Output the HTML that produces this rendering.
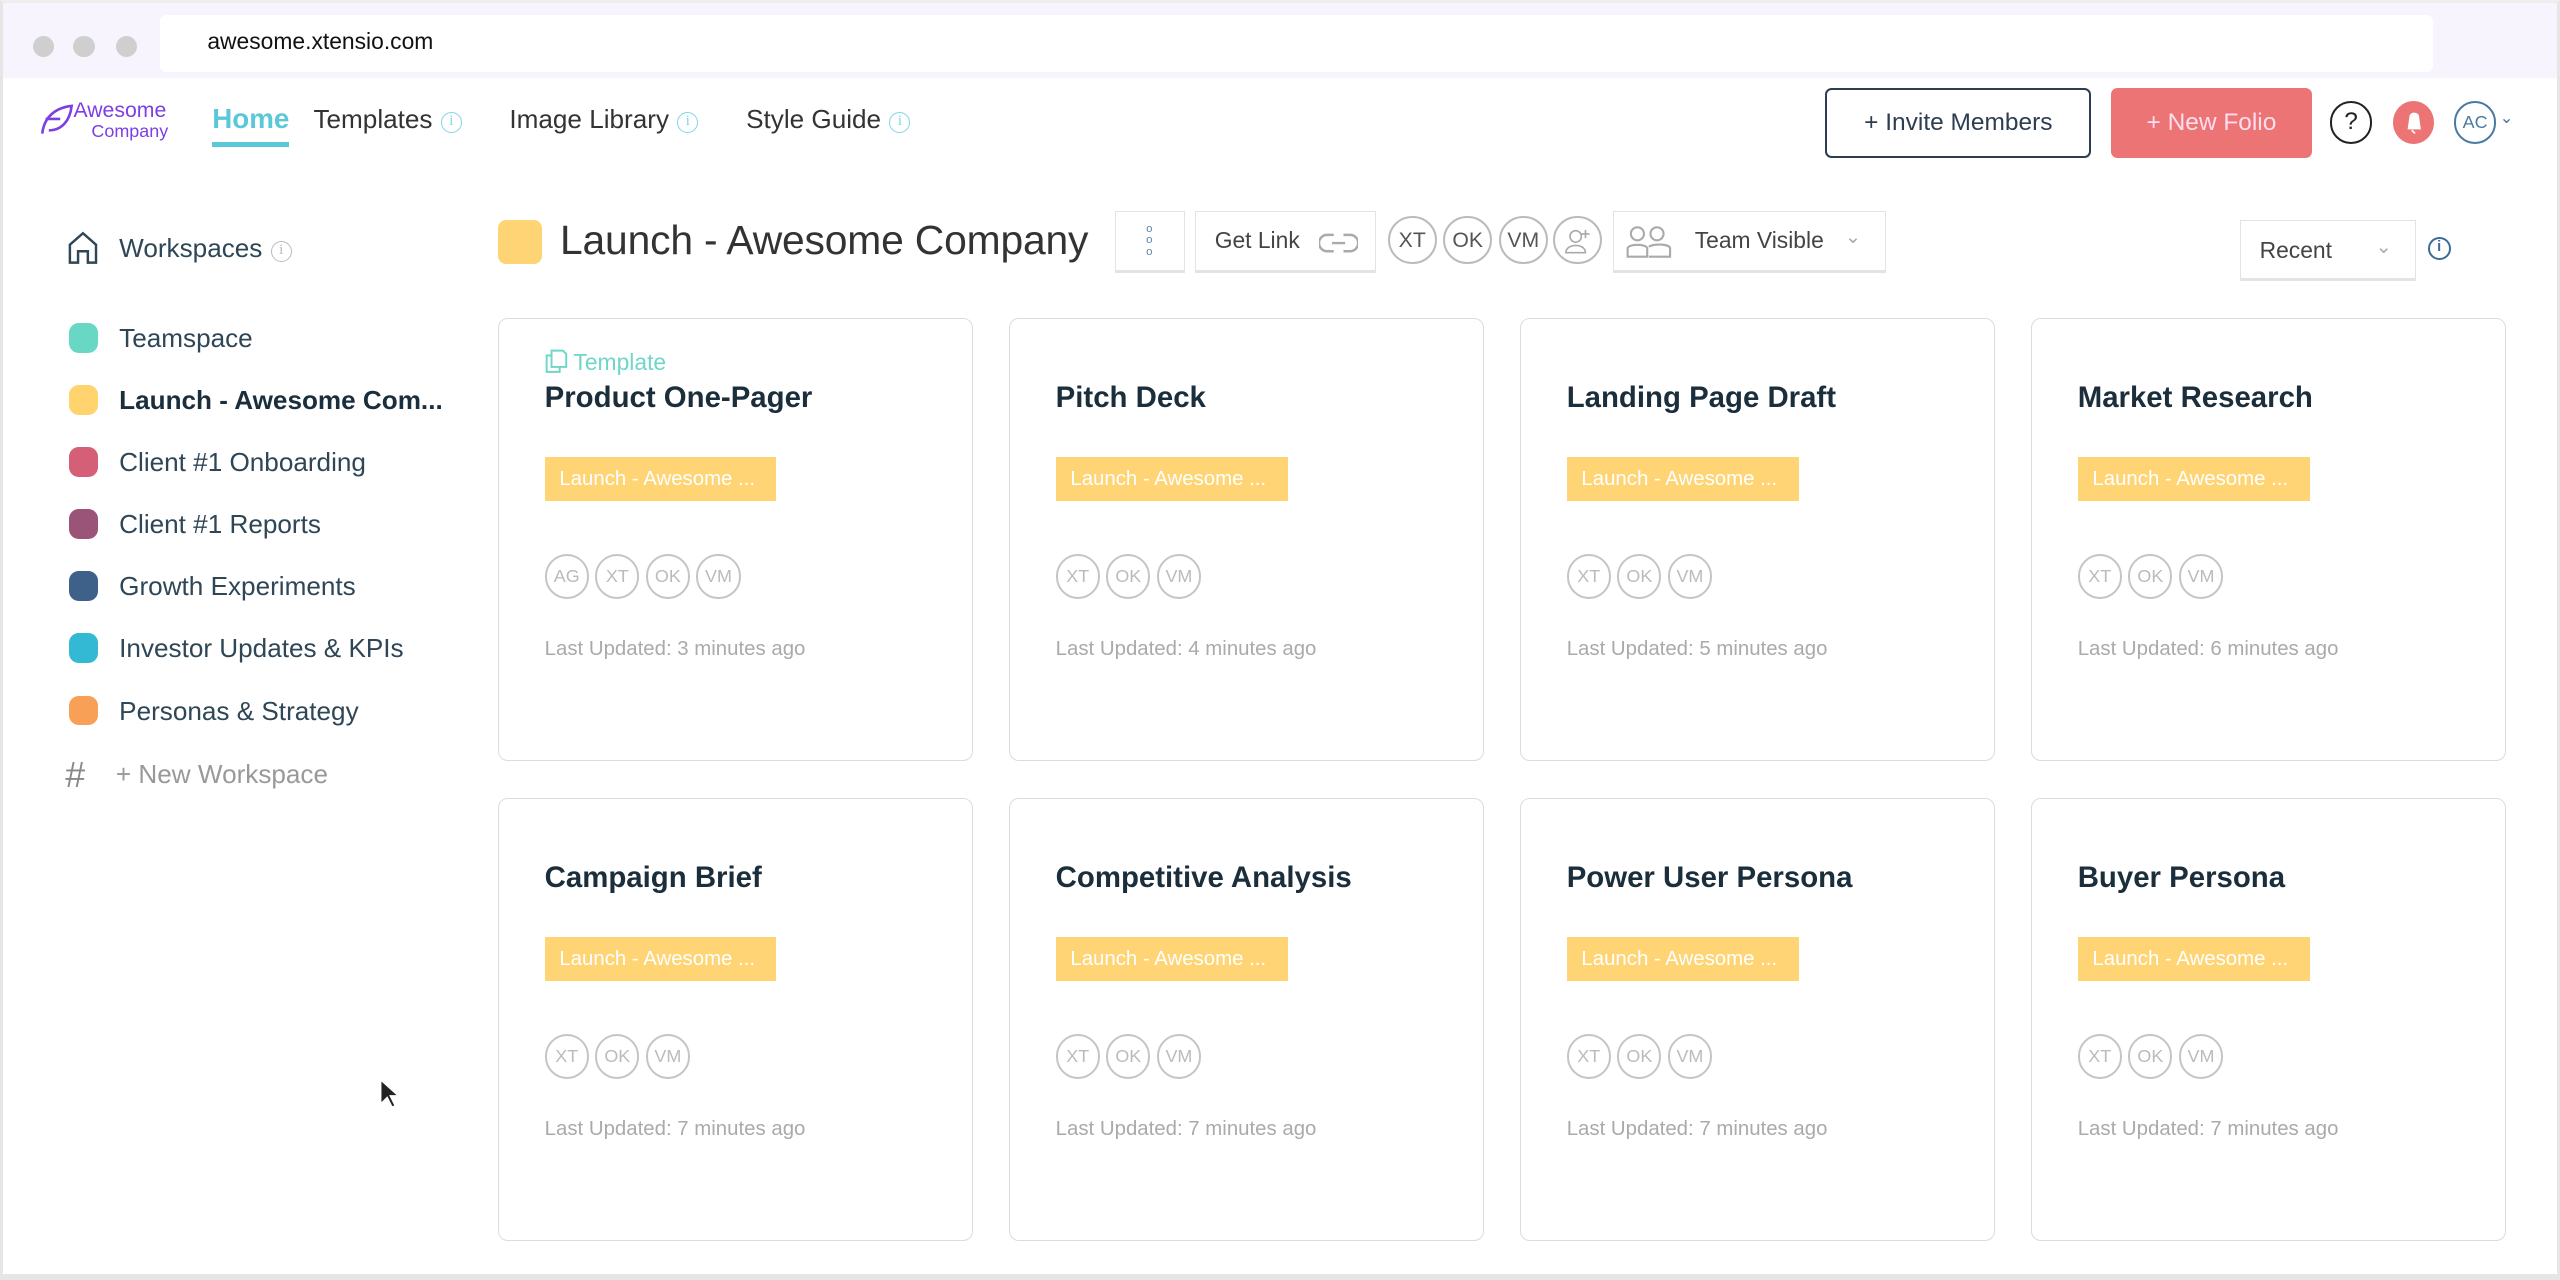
<!DOCTYPE html>
<html><head><meta charset="utf-8"><style>
*{margin:0;padding:0;box-sizing:border-box}
html,body{width:2560px;height:1280px;overflow:hidden;background:#e8e8e8}
#w{zoom:1.632653;width:1568px;height:784px;position:relative;background:#fff;font-family:"Liberation Sans",sans-serif;color:#333}
.a{position:absolute;white-space:nowrap}
.frame{position:absolute;left:0;top:0;width:1568px;height:784px;border-left:2px solid #e6e6e6;border-right:2px solid #e6e6e6;border-bottom:4px solid #e6e6e6;border-top:2px solid #eee;pointer-events:none}
.dot{position:absolute;width:13px;height:13px;border-radius:50%;background:#cfcfcf;top:22px}
.nav{font-size:16px;color:#333;top:64px}
.info{display:inline-block;width:13px;height:13px;border:1.2px solid #7dd6e4;border-radius:50%;font-size:9px;line-height:11px;text-align:center;color:#7dd6e4;vertical-align:2px;margin-left:5px;font-family:"Liberation Serif",serif}
.sd{position:absolute;left:42px;width:18px;height:18px;border-radius:6px}
.si{position:absolute;left:73px;font-size:16px;color:#2f4656}
.card{position:absolute;width:291px;height:271px;border:1px solid #dcdcdc;border-radius:6px;background:#fff}
.card .t{position:absolute;left:28px;top:38px;font-size:18px;font-weight:bold;color:#1b2e3c}
.card .tag{position:absolute;left:28px;top:84px;width:142px;height:27px;background:#ffd474;color:#fff;font-size:12.5px;line-height:27px;padding-left:9px}
.card .av{position:absolute;top:144px;left:28px;display:flex;gap:4px}
.av span,.hav{display:inline-block;width:27px;height:27px;border:1.3px solid #c5c5c5;border-radius:50%;font-size:11px;line-height:25px;text-align:center;color:#bbb}
.card .lu{position:absolute;left:28px;top:195px;font-size:12.5px;color:#aaa}
.card .tp{position:absolute;left:28px;top:18px;font-size:14px;color:#6fd6c8}
.box{position:absolute;border:1px solid #e3e3e3;border-bottom:2px solid #e3e3e3;background:#fff}
.hav{width:30px;height:30px;line-height:28px;font-size:13px;color:#555;border-color:#bbb;position:absolute;top:132px}
</style></head><body><div id="w">
<div class="a" style="left:0;top:0;width:1568px;height:48px;background:#f8f4fd"></div>
<div class="dot" style="left:20px"></div><div class="dot" style="left:45px"></div><div class="dot" style="left:71px"></div>
<div class="a" style="left:98px;top:9px;width:1392px;height:35px;background:#fff;border-radius:4px"></div>
<div class="a" style="left:127px;top:17px;font-size:14px;color:#111">awesome.xtensio.com</div>

<svg class="a" style="left:24px;top:62px" width="22" height="22" viewBox="0 0 22 22"><path d="M2 20 C3 10 10 4 20 3 C19 12 14 18 6 18 M4 11 H13" fill="none" stroke="#7b3fe4" stroke-width="1.6"/></svg>
<div class="a" style="left:45px;top:62px;font-family:'Liberation Sans Narrow','Liberation Sans',sans-serif;font-size:13px;color:#7b3fe4;line-height:12px">Awesome<br><span style="padding-left:11px;font-size:11px">Company</span></div>
<div class="a nav" style="left:130px;color:#5bc8d9;font-weight:bold;font-size:17px;top:63px">Home</div>
<div class="a" style="left:130px;top:87px;width:47px;height:3px;background:#5bc8d9"></div>
<div class="a nav" style="left:192px">Templates<span class="info">i</span></div>
<div class="a nav" style="left:312px">Image Library<span class="info">i</span></div>
<div class="a nav" style="left:457px">Style Guide<span class="info">i</span></div>

<div class="a" style="left:1118px;top:54px;width:163px;height:43px;border:1.5px solid #2c3e50;border-radius:4px;font-size:15px;color:#2c3e50;text-align:center;line-height:40px">+ Invite Members</div>
<div class="a" style="left:1293px;top:54px;width:123px;height:43px;background:#ec7474;border-radius:4px;font-size:15px;color:#fde;text-align:center;line-height:43px">+ New Folio</div>
<div class="a" style="left:1427px;top:62px;width:26px;height:26px;border:1.5px solid #222;border-radius:50%;text-align:center;line-height:23px;font-size:15px;color:#222">?</div>
<div class="a" style="left:1466px;top:62px;width:25px;height:26px;background:#ec7474;border-radius:50%"></div>
<svg class="a" style="left:1471px;top:67px" width="15" height="16" viewBox="0 0 15 16"><path d="M4 12 L5 5 C5 2 10 2 10 5 L11 12 Z M6 13 L8 15" fill="#fff" stroke="#fff"/></svg>
<div class="a" style="left:1503px;top:62px;width:26px;height:26px;border:1.3px solid #4a7aa3;border-radius:50%;text-align:center;line-height:24px;font-size:11px;color:#4a7aa3">AC</div>
<div class="a" style="left:1531px;top:66px;font-size:10px;color:#4a7aa3">&#8964;</div>

<svg class="a" style="left:40px;top:141px" width="22" height="22" viewBox="0 0 22 22"><path d="M3 20 V9 L11 2 L19 9 V20 H14 V13 H8 V20 Z" fill="none" stroke="#2f4656" stroke-width="1.5"/></svg>
<div class="si" style="top:143px">Workspaces<span class="info" style="border-color:#bbb;color:#bbb">i</span></div>
<div class="sd" style="top:198px;background:#68d8c4"></div><div class="si" style="top:198px">Teamspace</div>
<div class="sd" style="top:236px;background:#ffd36e"></div><div class="si" style="top:236px;font-weight:bold;color:#1b2e3c">Launch - Awesome Com...</div>
<div class="sd" style="top:274px;background:#d45f77"></div><div class="si" style="top:274px">Client #1 Onboarding</div>
<div class="sd" style="top:312px;background:#9a5478"></div><div class="si" style="top:312px">Client #1 Reports</div>
<div class="sd" style="top:350px;background:#3e6189"></div><div class="si" style="top:350px">Growth Experiments</div>
<div class="sd" style="top:388px;background:#33b9d3"></div><div class="si" style="top:388px">Investor Updates &amp; KPIs</div>
<div class="sd" style="top:426px;background:#f8a055"></div><div class="si" style="top:426px">Personas &amp; Strategy</div>
<div class="a" style="left:40px;top:462px;font-size:22px;color:#888">#</div>
<div class="si" style="top:465px;left:71px;color:#999">+ New Workspace</div>

<div class="a" style="left:305px;top:135px;width:27px;height:27px;background:#ffd474;border-radius:5px"></div>
<div class="a" style="left:343px;top:133px;font-size:25px;color:#333;letter-spacing:-0.1px">Launch - Awesome Company</div>
<div class="box" style="left:683px;top:129px;width:43px;height:38px"></div>
<div class="a" style="left:702px;top:137px;color:#5a8ab0;font-size:7px;line-height:7px">o<br>o<br>o</div>
<div class="box" style="left:732px;top:129px;width:111px;height:38px"></div>
<div class="a" style="left:744px;top:139px;font-size:14px;color:#444">Get Link</div>
<svg class="a" style="left:808px;top:141px" width="24" height="16" viewBox="0 0 24 16"><path d="M9 3 H5 A5 5 0 0 0 5 13 H9 M15 3 H19 A5 5 0 0 1 19 13 H15 M8 8 H16" fill="none" stroke="#aaa" stroke-width="1.5"/></svg>
<div class="hav" style="left:850px">XT</div><div class="hav" style="left:884px">OK</div><div class="hav" style="left:918px">VM</div>
<div class="hav" style="left:951px"></div>
<svg class="a" style="left:956px;top:138px" width="20" height="20" viewBox="0 0 20 20"><circle cx="9" cy="7" r="3.5" fill="none" stroke="#aaa"/><path d="M3 17 C3 11 15 11 15 17 Z M15 3 V8 M12.5 5.5 H17.5" fill="none" stroke="#aaa"/></svg>
<div class="box" style="left:988px;top:129px;width:167px;height:38px"></div>
<svg class="a" style="left:996px;top:137px" width="28" height="22" viewBox="0 0 28 22"><circle cx="7" cy="6" r="4" fill="none" stroke="#aaa" stroke-width="1.3"/><circle cx="19" cy="6" r="4" fill="none" stroke="#aaa" stroke-width="1.3"/><path d="M1 20 V15 C1 12 13 12 13 15 V20 Z M14 14 C16 12 27 12 27 15 V20 H14" fill="none" stroke="#aaa" stroke-width="1.3"/></svg>
<div class="a" style="left:1038px;top:139px;font-size:14px;color:#444">Team Visible</div>
<div class="a" style="left:1130px;top:138px;font-size:12px;color:#aaa">&#8964;</div>
<div class="box" style="left:1372px;top:135px;width:108px;height:37px"></div>
<div class="a" style="left:1384px;top:145px;font-size:14px;color:#444">Recent</div>
<div class="a" style="left:1455px;top:144px;font-size:12px;color:#aaa">&#8964;</div>
<div class="a" style="left:1487px;top:145px;width:14px;height:14px;border:1.5px solid #3e6a98;border-radius:50%;font-size:9px;line-height:11px;text-align:center;color:#3e6a98;font-weight:bold">i</div>

<div class="card" style="left:305px;top:195px"><div class="tp"><svg width="14" height="15" viewBox="0 0 14 15" style="vertical-align:-2px"><path d="M4 1 H11 L13 3 V11 H4 Z M4 4 H1 V14 H9 V11" fill="none" stroke="#6fd6c8" stroke-width="1.2"/></svg> Template</div><div class="t">Product One-Pager</div><div class="tag">Launch - Awesome ...</div><div class="av"><span>AG</span><span>XT</span><span>OK</span><span>VM</span></div><div class="lu">Last Updated: 3 minutes ago</div></div>
<div class="card" style="left:618px;top:195px"><div class="t">Pitch Deck</div><div class="tag">Launch - Awesome ...</div><div class="av"><span>XT</span><span>OK</span><span>VM</span></div><div class="lu">Last Updated: 4 minutes ago</div></div>
<div class="card" style="left:931px;top:195px"><div class="t">Landing Page Draft</div><div class="tag">Launch - Awesome ...</div><div class="av"><span>XT</span><span>OK</span><span>VM</span></div><div class="lu">Last Updated: 5 minutes ago</div></div>
<div class="card" style="left:1244px;top:195px"><div class="t">Market Research</div><div class="tag">Launch - Awesome ...</div><div class="av"><span>XT</span><span>OK</span><span>VM</span></div><div class="lu">Last Updated: 6 minutes ago</div></div>
<div class="card" style="left:305px;top:489px"><div class="t">Campaign Brief</div><div class="tag">Launch - Awesome ...</div><div class="av"><span>XT</span><span>OK</span><span>VM</span></div><div class="lu">Last Updated: 7 minutes ago</div></div>
<div class="card" style="left:618px;top:489px"><div class="t">Competitive Analysis</div><div class="tag">Launch - Awesome ...</div><div class="av"><span>XT</span><span>OK</span><span>VM</span></div><div class="lu">Last Updated: 7 minutes ago</div></div>
<div class="card" style="left:931px;top:489px"><div class="t">Power User Persona</div><div class="tag">Launch - Awesome ...</div><div class="av"><span>XT</span><span>OK</span><span>VM</span></div><div class="lu">Last Updated: 7 minutes ago</div></div>
<div class="card" style="left:1244px;top:489px"><div class="t">Buyer Persona</div><div class="tag">Launch - Awesome ...</div><div class="av"><span>XT</span><span>OK</span><span>VM</span></div><div class="lu">Last Updated: 7 minutes ago</div></div>

<svg class="a" style="left:232px;top:660px" width="14" height="20" viewBox="0 0 14 20"><path d="M1 1 V16 L5 12 L8 18 L10 17 L7 11 L12 11 Z" fill="#222" stroke="#fff" stroke-width="1"/></svg>
<div class="frame"></div>
</div></body></html>
